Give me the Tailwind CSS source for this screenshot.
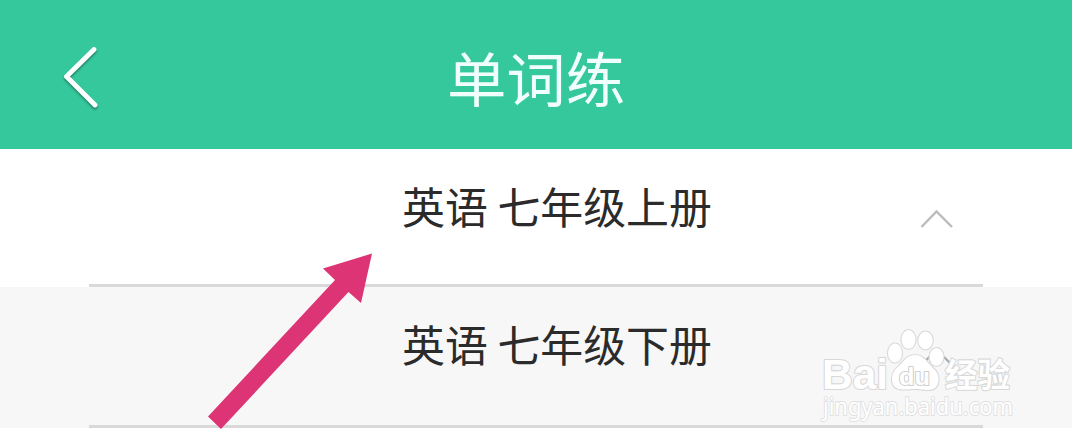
<!DOCTYPE html>
<html lang="zh-CN">
<head>
  <meta charset="UTF-8" />
  <meta name="viewport" content="width=device-width, initial-scale=1.0" />
  <script src="https://cdn.jsdelivr.net/npm/@tailwindcss/browser@4"></script>
  <title>单词练</title>
</head>
<body class="relative h-[444px] overflow-hidden bg-white font-['Noto_Sans_CJK_SC',sans-serif]">

  <!-- Header -->
  <header class="grid h-[149px] grid-cols-[160px_1fr_160px] items-center bg-[#36c89d]">
    <button class="pt-1 pl-[56px]">
      <svg class="h-[72px] w-[52px] drop-shadow-[0px_2px_1px_rgba(0,0,0,0.35)]" viewBox="0 0 52 72" fill="none" stroke="#fff" stroke-width="4.8" stroke-linecap="round" stroke-linejoin="round">
        <path d="M38 8.5 10.5 35.5 39 64" />
      </svg>
    </button>
    <h1 class="pt-[5px] text-center text-[59.4px] leading-none font-normal text-[#f0fffb]">单词练</h1>
  </header>

  <!-- Book list -->
  <main>
    <div class="h-[138px] px-[89px]">
      <div class="flex h-full items-start border-b-3 border-[#d9d9d9]">
        <div class="flex-1 pt-[34px] pl-[313px] text-[42.9px] leading-[44px] text-[#2b2b2b]">英语 七年级上册</div>
        <svg class="mt-[60px] mr-[29px] h-5 w-[34px]" viewBox="0 0 34 20" fill="none" stroke="#bcbcbc" stroke-width="2.4">
          <path d="M1.5 18 16.5 2.5 32 18" />
        </svg>
      </div>
    </div>
    <div class="h-[141px] bg-[#f7f7f7] px-[89px]">
      <div class="flex h-full items-start border-b-3 border-[#d9d9d9]">
        <div class="flex-1 pt-[34px] pl-[313px] text-[42.9px] leading-[44px] text-[#2b2b2b]">英语 七年级下册</div>
        <svg class="mt-[60px] mr-[29px] h-5 w-[34px]" viewBox="0 0 34 20" fill="none" stroke="#aaa" stroke-width="2.2">
          <path d="M1.5 18 16.5 2.5 32 18" />
        </svg>
      </div>
    </div>
  </main>

  <!-- Pointer arrow -->
  <svg class="absolute top-0 left-0" width="1072" height="444" viewBox="0 0 1072 444">
    <path fill="#dc3475" d="M372 253.5 361 303 348.5 292 221 429 208 416.5 335 280 323 268.5Z" />
  </svg>

  <!-- Watermark -->
  <svg class="absolute top-[320px] left-[810px]" width="220" height="124" viewBox="0 0 220 124" fill="#fff" stroke="#d8d8d8" stroke-width="2.2" stroke-linejoin="round" paint-order="stroke">
    <text x="12" y="69" font-family="Liberation Sans" font-weight="bold" font-size="43" textLength="66" lengthAdjust="spacingAndGlyphs">Bai</text>
    <g>
      <ellipse cx="85" cy="33" rx="7" ry="9.4" />
      <ellipse cx="98.5" cy="19.5" rx="7" ry="9.4" />
      <ellipse cx="115.5" cy="20.5" rx="7.2" ry="9" />
      <ellipse cx="126.500" cy="37" rx="7" ry="9" />
      <path d="M105 35C97 35 94 41 90 45C85 49 82 53 82 59C82 66 86 69.500 93 69.500C98 69.500 101 69 105 69C110 69 112 70 118 70C125 70 128.500 66 128.500 59C128.500 53 125 50 121 46C116 41 113 35 105 35Z" />
    </g>
    <text x="89" y="64.5" font-family="Liberation Sans" font-size="23" font-weight="bold" stroke-width="2" textLength="31" lengthAdjust="spacingAndGlyphs" stroke="#d0d0d0">du</text>
    <text x="135" y="66.500" font-family="Noto Sans CJK SC" font-weight="bold" font-size="33" textLength="65" lengthAdjust="spacingAndGlyphs">经验</text>
    <text x="13" y="94.5" font-family="Noto Sans" font-size="23" textLength="190" lengthAdjust="spacingAndGlyphs" stroke="#e0e0e0" stroke-width="1.8">jingyan.baidu.com</text>
  </svg>

</body>
</html>
